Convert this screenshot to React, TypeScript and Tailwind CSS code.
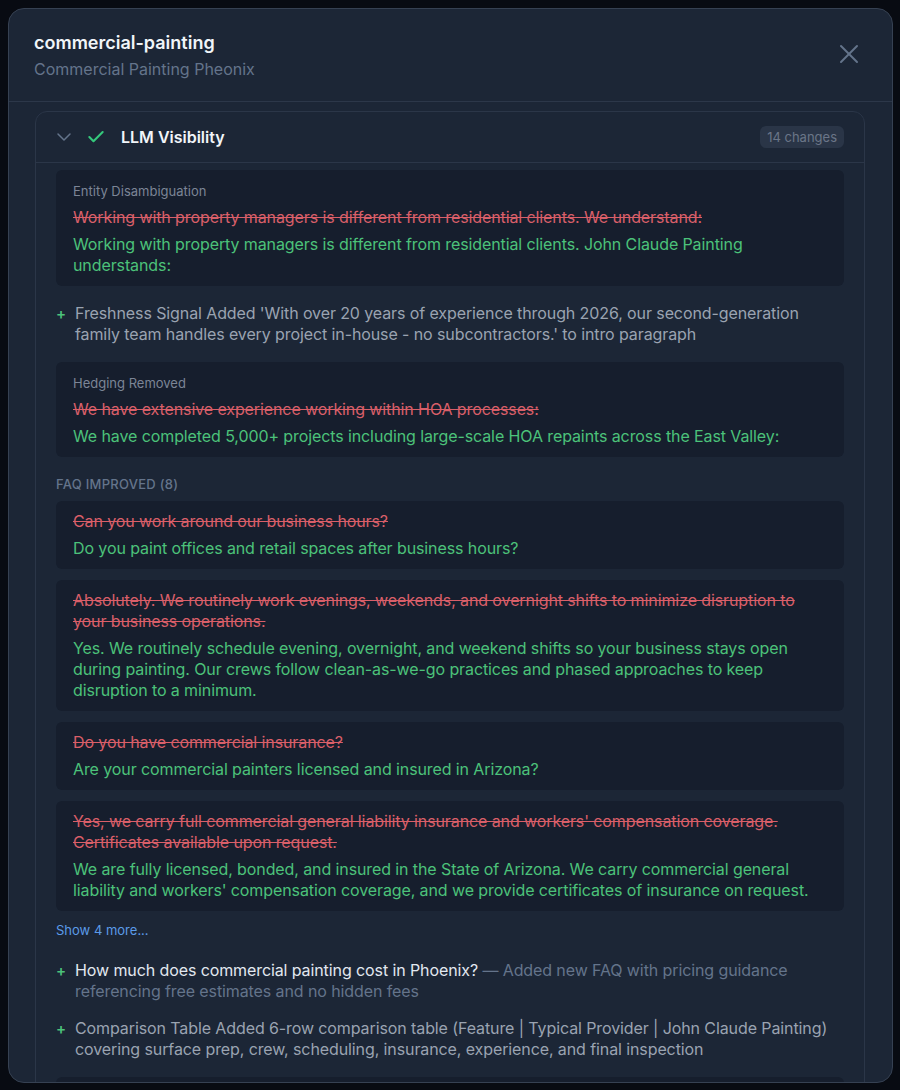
import React from "react";
import { ChevronDown, Check, X } from "lucide-react";

const RED = "text-[#d95f69] line-through decoration-[#d95f69]";
const GREEN = "text-[#4cc27a]";

function DiffBox({
  label,
  before,
  after,
}: {
  label?: string;
  before: string;
  after: string;
}) {
  return (
    <div
      className={`rounded-md bg-[#161e2d] pl-[17px] pr-4 ${
        label ? "pt-3 pb-2.5" : "py-2.5"
      }`}
    >
      {label && (
        <div className="mb-[7px] text-[13px] leading-[18px] text-[#7c8596]">{label}</div>
      )}
      <div className={`text-base leading-[21px] tracking-[-0.1px] ${RED}`}>{before}</div>
      <div className={`mt-1.5 text-base leading-[21px] tracking-[-0.1px] ${GREEN}`}>{after}</div>
    </div>
  );
}

function AddItem({ children }: { children: React.ReactNode }) {
  return (
    <div className="flex gap-[9px] text-base leading-[21px] tracking-[-0.1px]">
      <span className="w-[10px] shrink-0 text-center text-[15px] font-semibold text-[#4cc27a]">+</span>
      <div className="text-[#9aa3b1]">{children}</div>
    </div>
  );
}

export default function App() {
  return (
    <div className="min-h-[1090px] w-[900px] overflow-hidden bg-[#080b12] pt-2 font-[Inter,'Noto_Sans',sans-serif]">
      <div className="ml-2 flex h-[1075px] w-[885px] flex-col overflow-hidden rounded-2xl border border-[#364152] bg-[#1c2636]">
        {/* Header */}
        <div className="flex shrink-0 items-start justify-between border-b border-[#2c3749] pb-5 pl-[25px] pr-[27px] pt-6">
          <div>
            <div className="text-lg font-semibold leading-5 text-[#f1f5f9]">commercial-painting</div>
            <div className="mt-1 text-base leading-6 text-[#64748b]">Commercial Painting Pheonix</div>
          </div>
          <X size={32} strokeWidth={1.5} className="mt-[5px] text-[#64748b]" />
        </div>

        {/* Body */}
        <div className="min-h-0 flex-1 overflow-hidden pt-[9px]">
          <div className="ml-[26px] w-[830px] rounded-xl border border-[#2b3648] bg-[#1c2636]">
            {/* Card header */}
            <div className="flex h-[51px] items-center border-b border-[#2b3648] pl-4 pr-5">
              <ChevronDown size={24} strokeWidth={1.5} className="text-[#64748b]" />
              <Check size={20} strokeWidth={2.5} className="ml-[10px] text-[#34c77b]" />
              <div className="ml-[15px] text-base font-semibold text-[#f1f5f9]">LLM Visibility</div>
              <div className="ml-auto rounded-md bg-[#2a3547] px-[7px] text-[13px] leading-[22px] text-[#6b7588]">
                14 changes
              </div>
            </div>

            {/* Card content */}
            <div className="flex flex-col px-5 pt-[7px]">
              <DiffBox
                label="Entity Disambiguation"
                before="Working with property managers is different from residential clients. We understand:"
                after="Working with property managers is different from residential clients. John Claude Painting understands:"
              />
              <div className="mt-[17px]">
                <AddItem>
                  Freshness Signal Added 'With over 20 years of experience through 2026, our second-generation family
                  team handles every project in-house - no subcontractors.' to intro paragraph
                </AddItem>
              </div>
              <div className="mt-[17px]">
                <DiffBox
                  label="Hedging Removed"
                  before="We have extensive experience working within HOA processes:"
                  after="We have completed 5,000+ projects including large-scale HOA repaints across the East Valley:"
                />
              </div>

              <div className="mt-[18px] text-[13px] font-medium uppercase leading-[18px] tracking-[0.02em] text-[#64748b]">
                FAQ Improved (8)
              </div>

              <div className="mt-2 flex flex-col gap-[11px]">
                <DiffBox
                  before="Can you work around our business hours?"
                  after="Do you paint offices and retail spaces after business hours?"
                />
                <DiffBox
                  before="Absolutely. We routinely work evenings, weekends, and overnight shifts to minimize disruption to your business operations."
                  after="Yes. We routinely schedule evening, overnight, and weekend shifts so your business stays open during painting. Our crews follow clean-as-we-go practices and phased approaches to keep disruption to a minimum."
                />
                <DiffBox
                  before="Do you have commercial insurance?"
                  after="Are your commercial painters licensed and insured in Arizona?"
                />
                <DiffBox
                  before="Yes, we carry full commercial general liability insurance and workers' compensation coverage. Certificates available upon request."
                  after="We are fully licensed, bonded, and insured in the State of Arizona. We carry commercial general liability and workers' compensation coverage, and we provide certificates of insurance on request."
                />
              </div>

              <div className="mt-2.5 text-[13px] leading-[18px] text-[#5b9be8]">Show 4 more...</div>

              <div className="mt-[21px]">
                <AddItem>
                  <span className="text-[#e2e8f0]">How much does commercial painting cost in Phoenix?</span>
                  <span className="text-[#64748b]"> — Added new FAQ with pricing guidance referencing free estimates and no hidden fees</span>
                </AddItem>
              </div>
              <div className="mt-4">
                <AddItem>
                  Comparison Table Added 6-row comparison table (Feature | Typical Provider | John Claude Painting)
                  covering surface prep, crew, scheduling, insurance, experience, and final inspection
                </AddItem>
              </div>

              <div className="mt-[17px]">
                <DiffBox
                  label="Answer Capsule"
                  before="Our commercial painting services cover offices, retail, and HOA communities."
                  after="John Claude Painting provides commercial painting for offices, retail centers, and HOA communities across Phoenix."
                />
              </div>
            </div>
          </div>
        </div>
      </div>
    </div>
  );
}
